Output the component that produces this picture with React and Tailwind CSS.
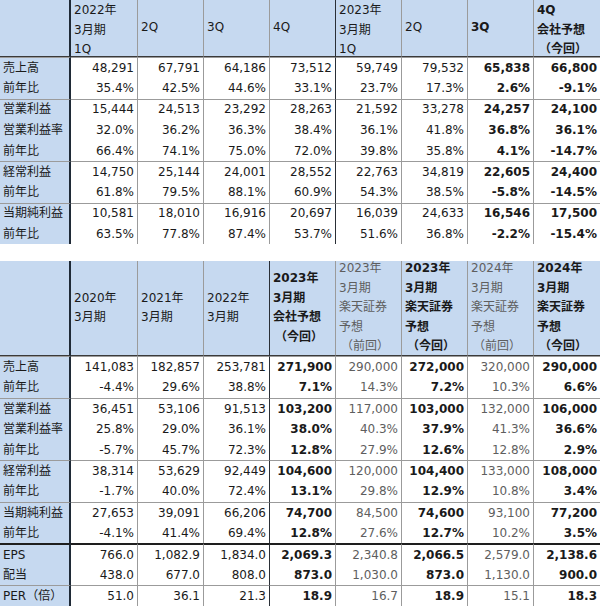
import React from 'react';

const FONT = { fontFamily: '"DejaVu Sans", "Noto Sans CJK JP", sans-serif' };

const topHead = [
  { lines: ['2022年', '3月期', '1Q'], top: true },
  { lines: ['2Q'] },
  { lines: ['3Q'] },
  { lines: ['4Q'] },
  { lines: ['2023年', '3月期', '1Q'], top: true },
  { lines: ['2Q'] },
  { lines: ['3Q'], bold: true },
  { lines: ['4Q', '会社予想', '（今回）'], bold: true, top: true },
];

const topRows = [
  { label: '売上高', group: true, v: ['48,291', '67,791', '64,186', '73,512', '59,749', '79,532', '65,838', '66,800'] },
  { label: '前年比', v: ['35.4%', '42.5%', '44.6%', '33.1%', '23.7%', '17.3%', '2.6%', '-9.1%'] },
  { label: '営業利益', group: true, v: ['15,444', '24,513', '23,292', '28,263', '21,592', '33,278', '24,257', '24,100'] },
  { label: '営業利益率', v: ['32.0%', '36.2%', '36.3%', '38.4%', '36.1%', '41.8%', '36.8%', '36.1%'] },
  { label: '前年比', v: ['66.4%', '74.1%', '75.0%', '72.0%', '39.8%', '35.8%', '4.1%', '-14.7%'] },
  { label: '経常利益', group: true, v: ['14,750', '25,144', '24,001', '28,552', '22,763', '34,819', '22,605', '24,400'] },
  { label: '前年比', v: ['61.8%', '79.5%', '88.1%', '60.9%', '54.3%', '38.5%', '-5.8%', '-14.5%'] },
  { label: '当期純利益', group: true, v: ['10,581', '18,010', '16,916', '20,697', '16,039', '24,633', '16,546', '17,500'] },
  { label: '前年比', v: ['63.5%', '77.8%', '87.4%', '53.7%', '51.6%', '36.8%', '-2.2%', '-15.4%'] },
];

const yearHead = [
  { lines: ['2020年', '3月期'] },
  { lines: ['2021年', '3月期'] },
  { lines: ['2022年', '3月期'] },
  { lines: ['2023年', '3月期', '会社予想', '（今回）'], bold: true },
  { lines: ['2023年', '3月期', '楽天証券', '予想', '（前回）'], muted: true },
  { lines: ['2023年', '3月期', '楽天証券', '予想', '（今回）'], bold: true },
  { lines: ['2024年', '3月期', '楽天証券', '予想', '（前回）'], muted: true },
  { lines: ['2024年', '3月期', '楽天証券', '予想', '（今回）'], bold: true },
];

const yearRows = [
  { label: '売上高', group: true, v: ['141,083', '182,857', '253,781', '271,900', '290,000', '272,000', '320,000', '290,000'] },
  { label: '前年比', v: ['-4.4%', '29.6%', '38.8%', '7.1%', '14.3%', '7.2%', '10.3%', '6.6%'] },
  { label: '営業利益', group: true, v: ['36,451', '53,106', '91,513', '103,200', '117,000', '103,000', '132,000', '106,000'] },
  { label: '営業利益率', v: ['25.8%', '29.0%', '36.1%', '38.0%', '40.3%', '37.9%', '41.3%', '36.6%'] },
  { label: '前年比', v: ['-5.7%', '45.7%', '72.3%', '12.8%', '27.9%', '12.6%', '12.8%', '2.9%'] },
  { label: '経常利益', group: true, v: ['38,314', '53,629', '92,449', '104,600', '120,000', '104,400', '133,000', '108,000'] },
  { label: '前年比', v: ['-1.7%', '40.0%', '72.4%', '13.1%', '29.8%', '12.9%', '10.8%', '3.4%'] },
  { label: '当期純利益', group: true, v: ['27,653', '39,091', '66,206', '74,700', '84,500', '74,600', '93,100', '77,200'] },
  { label: '前年比', v: ['-4.1%', '41.4%', '69.4%', '12.8%', '27.6%', '12.7%', '10.2%', '3.5%'] },
  { label: 'EPS', thick: true, v: ['766.0', '1,082.9', '1,834.0', '2,069.3', '2,340.8', '2,066.5', '2,579.0', '2,138.6'] },
  { label: '配当', v: ['438.0', '677.0', '808.0', '873.0', '1,030.0', '873.0', '1,130.0', '900.0'] },
  { label: 'PER（倍）', group: true, v: ['51.0', '36.1', '21.3', '18.9', '16.7', '18.9', '15.1', '18.3'] },
];

// left border of data column i (0-based, after the label column)
const sideLine = (i, darkCol) => {
  if (i === 0) return '';
  return i === darkCol ? 'border-l border-l-[#2a2f36]' : 'border-l border-l-[#9b9b9b]';
};

const rowLine = (row) => {
  if (row.thick) return 'border-t-2 border-t-[#1e1e1e]';
  if (row.group) return 'border-t border-t-[#9b9b9b]';
  return '';
};

const Table = ({ head, rows, headH, darkCol }) => (
  <div className="grid grid-cols-[71px_repeat(7,66px)_67px] text-[12px] text-[#1a1a1a]" style={FONT}>
    <div className="bg-[#c6d9f0] border-r-2 border-r-[#1f2a36] border-b border-b-[#3a3a3a]" style={{ height: headH }} />
    {head.map((h, i) => (
      <div
        key={i}
        className={`bg-[#c6d9f0] border-b border-b-[#3a3a3a] ${sideLine(i, darkCol)} flex flex-col pl-[3px] leading-[19.5px] ${
          h.top ? 'justify-start pt-[1px]' : 'justify-center'
        } ${h.bold ? 'font-bold' : ''} ${h.muted ? 'text-[#5e5e5e]' : ''}`}
        style={{ height: headH }}
      >
        {h.lines.map((l, j) => (
          <span key={j} className={l.startsWith('（') ? 'pl-[2px]' : ''}>
            {l}
          </span>
        ))}
      </div>
    ))}
    {rows.map((r, ri) => (
      <React.Fragment key={ri}>
        <div className={`h-[20.8px] bg-[#c6d9f0] border-r-2 border-r-[#1f2a36] ${rowLine(r)} pl-[3px] flex items-center leading-none`}>
          {r.label}
        </div>
        {r.v.map((v, i) => (
          <div
            key={i}
            className={`h-[20.8px] bg-white ${rowLine(r)} ${sideLine(i, darkCol)} pr-[3px] flex items-center justify-end leading-none ${
              head[i].bold ? 'font-bold' : ''
            } ${head[i].muted ? 'text-[#5e5e5e]' : ''}`}
          >
            {v}
          </div>
        ))}
      </React.Fragment>
    ))}
  </div>
);

export default function App() {
  return (
    <div className="w-[600px] h-[608px] bg-white overflow-hidden flex flex-col">
      <Table head={topHead} rows={topRows} headH="57px" darkCol={4} />
      <div className="h-[17px]" />
      <Table head={yearHead} rows={yearRows} headH="95px" darkCol={3} />
    </div>
  );
}
